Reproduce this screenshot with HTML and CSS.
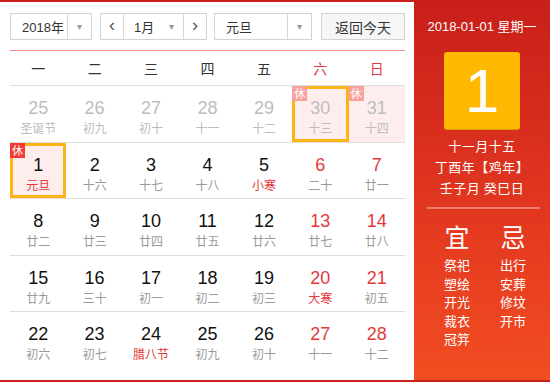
FILE: index.html
```html
<!DOCTYPE html>
<html lang="zh-CN">
<head>
    <meta charset="UTF-8">
    <title>万年历</title>
    <link rel="stylesheet" href="styles.css">
</head>
<body>
    <div class="calendar">
        <div class="main">
            <div class="toolbar">
                <div class="select year-select">
                    <span class="select-text">2018年</span>
                    <span class="select-arrow">&#9662;</span>
                </div>
                <div class="month-group">
                    <span class="month-btn">&lsaquo;</span>
                    <div class="month-select">
                        <span class="select-text">1月</span>
                        <span class="select-arrow">&#9662;</span>
                    </div>
                    <span class="month-btn">&rsaquo;</span>
                </div>
                <div class="select holiday-select">
                    <span class="select-text">元旦</span>
                    <span class="select-arrow">&#9662;</span>
                </div>
                <div class="today-btn">返回今天</div>
            </div>

            <div class="week">
                <span>一</span><span>二</span><span>三</span><span>四</span><span>五</span>
                <span class="weekend">六</span><span class="weekend">日</span>
            </div>

            <div class="days">
                <div class="day other"><b>25</b><i>圣诞节</i></div>
                <div class="day other"><b>26</b><i>初九</i></div>
                <div class="day other"><b>27</b><i>初十</i></div>
                <div class="day other"><b>28</b><i>十一</i></div>
                <div class="day other"><b>29</b><i>十二</i></div>
                <div class="day other rest hover"><em class="badge">休</em><b>30</b><i>十三</i></div>
                <div class="day other rest"><em class="badge">休</em><b>31</b><i>十四</i></div>

                <div class="day rest selected"><em class="badge">休</em><b>1</b><i class="festival">元旦</i></div>
                <div class="day"><b>2</b><i>十六</i></div>
                <div class="day"><b>3</b><i>十七</i></div>
                <div class="day"><b>4</b><i>十八</i></div>
                <div class="day"><b>5</b><i class="festival">小寒</i></div>
                <div class="day weekend"><b>6</b><i>二十</i></div>
                <div class="day weekend"><b>7</b><i>廿一</i></div>

                <div class="day"><b>8</b><i>廿二</i></div>
                <div class="day"><b>9</b><i>廿三</i></div>
                <div class="day"><b>10</b><i>廿四</i></div>
                <div class="day"><b>11</b><i>廿五</i></div>
                <div class="day"><b>12</b><i>廿六</i></div>
                <div class="day weekend"><b>13</b><i>廿七</i></div>
                <div class="day weekend"><b>14</b><i>廿八</i></div>

                <div class="day"><b>15</b><i>廿九</i></div>
                <div class="day"><b>16</b><i>三十</i></div>
                <div class="day"><b>17</b><i>初一</i></div>
                <div class="day"><b>18</b><i>初二</i></div>
                <div class="day"><b>19</b><i>初三</i></div>
                <div class="day weekend"><b>20</b><i class="festival">大寒</i></div>
                <div class="day weekend"><b>21</b><i>初五</i></div>

                <div class="day last"><b>22</b><i>初六</i></div>
                <div class="day last"><b>23</b><i>初七</i></div>
                <div class="day last"><b>24</b><i class="festival">腊八节</i></div>
                <div class="day last"><b>25</b><i>初九</i></div>
                <div class="day last"><b>26</b><i>初十</i></div>
                <div class="day last weekend"><b>27</b><i>十一</i></div>
                <div class="day last weekend"><b>28</b><i>十二</i></div>
            </div>
        </div>

        <div class="side">
            <div class="side-date">2018-01-01 星期一</div>
            <div class="side-day">1</div>
            <div class="side-lunar">
                <p>十一月十五</p>
                <p>丁酉年【鸡年】</p>
                <p>壬子月 癸巳日</p>
            </div>
            <div class="side-line"></div>
            <div class="almanac">
                <div class="almanac-col">
                    <h3>宜</h3>
                    <p>祭祀</p>
                    <p>塑绘</p>
                    <p>开光</p>
                    <p>裁衣</p>
                    <p>冠笄</p>
                </div>
                <div class="almanac-col">
                    <h3>忌</h3>
                    <p>出行</p>
                    <p>安葬</p>
                    <p>修坟</p>
                    <p>开市</p>
                </div>
            </div>
        </div>
    </div>
</body>
</html>
```

FILE: styles.css
```css
* {
    box-sizing: border-box;
}

body {
    margin: 0;
    font-family: "Liberation Sans", "Noto Sans CJK SC", sans-serif;
    color: #333;
}

.calendar {
    display: flex;
    width: 550px;
    height: 382px;
    border-top: 2px solid #c9201b;
    border-bottom: 2px solid #c9201b;
    background: #fff;
}

/* left part */
.main {
    width: 414px;
    padding: 0 9px 0 10px;
}

.toolbar {
    display: flex;
    height: 49px;
    padding-top: 11px;
    border-bottom: 1px solid #f48a84;
    font-size: 13px;
}

.select,
.month-group,
.today-btn {
    display: flex;
    height: 27px;
    border: 1px solid #d2d2d2;
    align-items: center;
}

.select-text {
    flex: 1;
    padding-left: 11px;
}

.select-arrow {
    width: 24px;
    height: 100%;
    border-left: 1px solid #d8d8d8;
    color: #999;
    font-size: 10px;
    line-height: 25px;
    text-align: center;
}

.year-select {
    width: 82px;
}

.month-group {
    width: 107px;
    margin-left: 8px;
}

.month-btn {
    width: 22px;
    height: 100%;
    color: #555;
    font-size: 18px;
    line-height: 22px;
    text-align: center;
}

.month-select {
    display: flex;
    flex: 1;
    height: 100%;
    align-items: center;
    border-left: 1px solid #d8d8d8;
    border-right: 1px solid #d8d8d8;
}

.month-select .select-text {
    padding-left: 10px;
}

.month-select .select-arrow {
    border-left: 0;
}

.holiday-select {
    width: 98px;
    margin-left: 7px;
}

.today-btn {
    width: 84px;
    margin-left: 9px;
    justify-content: center;
    background: #f6f6f6;
    font-size: 14px;
}

.week {
    display: grid;
    grid-template-columns: repeat(7, 1fr);
    height: 35px;
    border-bottom: 1px solid #dedede;
    font-family: "Noto Sans CJK SC", sans-serif;
    font-size: 14px;
    line-height: 34px;
    text-align: center;
}

.week .weekend {
    color: #e4393c;
}

.days {
    display: grid;
    grid-template-columns: repeat(7, 1fr);
    grid-auto-rows: 56.5px;
}

.day {
    position: relative;
    display: flex;
    flex-direction: column;
    align-items: center;
    padding-top: 11px;
    border-bottom: 1px solid #dedede;
}

.day.last {
    border-bottom: 0;
}

.day b {
    font-size: 18px;
    font-weight: normal;
    line-height: 22px;
    color: #111;
}

.day i {
    margin-top: 1px;
    font-family: "Noto Sans CJK SC", sans-serif;
    font-size: 12px;
    font-style: normal;
    line-height: 16px;
    color: #9a9a9a;
}

.day.weekend b {
    color: #e4393c;
}

.day i.festival {
    color: #e4393c;
}

.day.other b,
.day.other i {
    color: #bdbdbd;
}

.day.rest {
    background: #fdeded;
}

.day.selected,
.day.hover {
    box-shadow: inset 0 0 0 3px #fdb414;
}

.badge {
    position: absolute;
    top: 0;
    left: 0;
    width: 15px;
    height: 15px;
    background: #f23b35;
    color: #fff;
    font-family: "Noto Sans CJK SC", sans-serif;
    font-size: 11px;
    font-style: normal;
    line-height: 15px;
    text-align: center;
}

.day.other .badge {
    background: #f8a29f;
}

/* right part */
.side {
    flex: 1;
    background: linear-gradient(#c81f1a, #e2371f 55%, #f24d22);
    color: #fff;
    text-align: center;
    font-family: "Liberation Sans", "Noto Sans CJK SC", sans-serif;
}

.side-date {
    margin-top: 16px;
    font-size: 13px;
    line-height: 18px;
}

.side-day {
    width: 76px;
    height: 77px;
    margin: 16px auto 0;
    border-radius: 3px;
    background: #ffb900;
    box-shadow: 0 1px 0 #d99a05;
    font-size: 62px;
    line-height: 77px;
}

.side-lunar {
    margin-top: 6px;
    font-family: "Noto Sans CJK SC", sans-serif;
    font-size: 13px;
    letter-spacing: 0.5px;
}

.side-lunar p {
    margin: 0;
    line-height: 21px;
}

.side-line {
    height: 2px;
    margin: 9px 10px 0 13px;
    background: rgba(255, 255, 255, 0.35);
}

.almanac {
    display: flex;
    justify-content: center;
    gap: 26px;
    margin-top: 12px;
    padding-left: 6px;
    font-family: "Noto Sans CJK SC", sans-serif;
}

.almanac-col {
    width: 30px;
}

.almanac h3 {
    margin: 0 0 5px;
    font-size: 25px;
    font-weight: normal;
    line-height: 30px;
}

.almanac p {
    margin: 0;
    font-size: 13px;
    line-height: 18.6px;
}
```
